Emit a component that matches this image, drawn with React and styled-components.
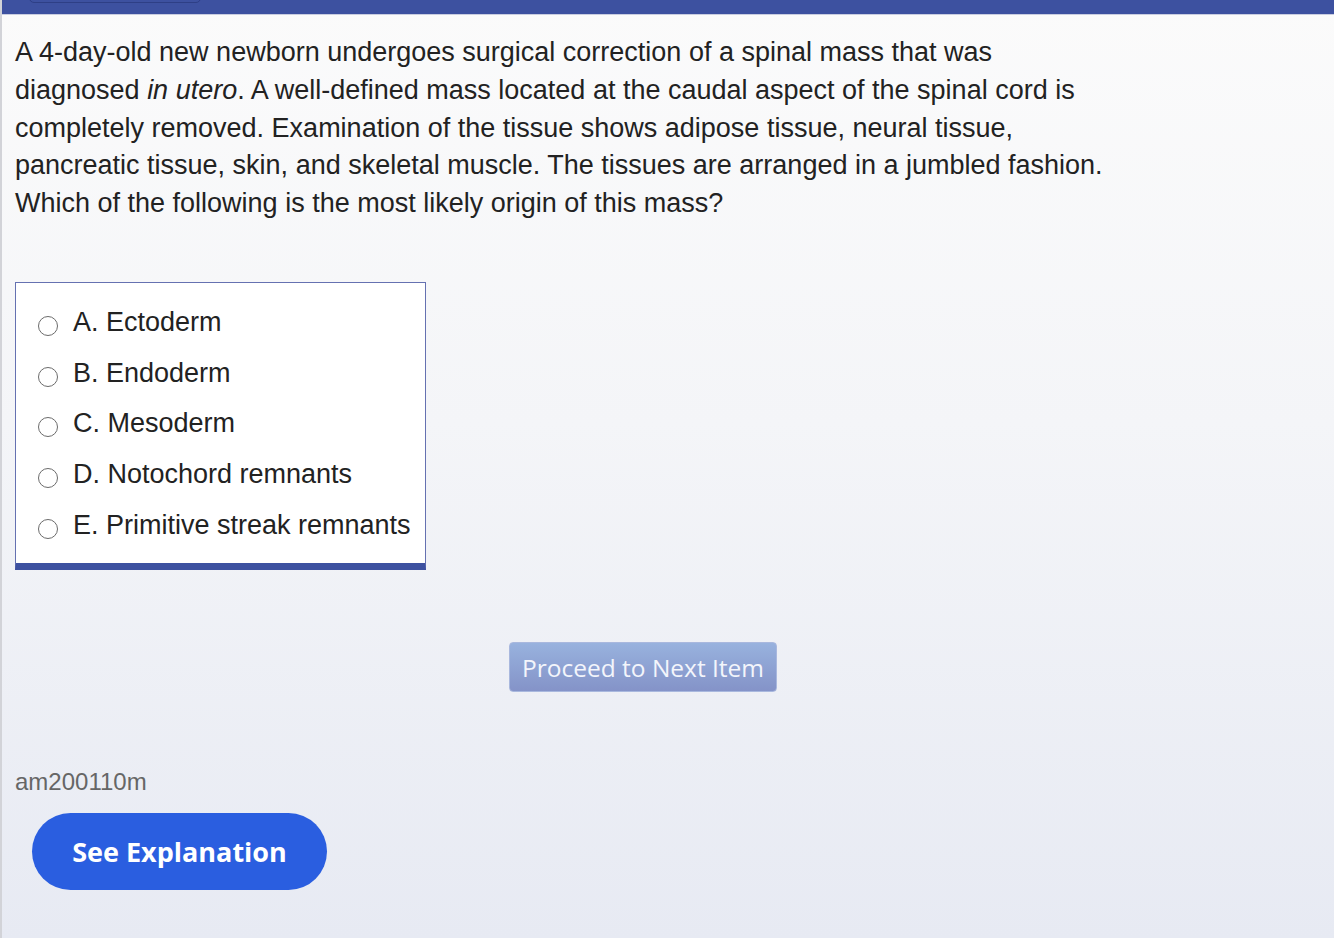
import React from 'react';
import styled, { createGlobalStyle } from 'styled-components';

const colors = {
  navy: '#3d51a0',
  text: '#222222',
  muted: '#666666',
  frame: '#6571b1',
  blue: '#2a5ee0',
};

const GlobalStyle = createGlobalStyle`
  html, body {
    margin: 0;
    padding: 0;
  }
  body {
    font-family: "Liberation Sans", Arial, sans-serif;
    background: linear-gradient(180deg, #fbfbfb 0%, #f4f5f8 45%, #e7eaf3 100%);
    min-height: 100vh;
  }
`;

const Page = styled.div`
  min-height: 100vh;
  border-left: 2px solid #d2d3d8;
  box-sizing: border-box;
  display: flex;
  flex-direction: column;
`;

const TopBar = styled.div`
  height: 14px;
  background: ${colors.navy};
  border-bottom: 1px solid #c9cde0;
  padding-left: 27px;
  display: flex;
  align-items: flex-start;
  overflow: hidden;
`;

const Tab = styled.div`
  width: 172px;
  height: 20px;
  margin-top: -17px;
  border: 1px solid #2e3f86;
  border-radius: 5px;
  box-sizing: border-box;
`;

const Content = styled.main`
  padding: 0 13px;
  display: flex;
  flex-direction: column;
  align-items: flex-start;
`;

const Stem = styled.p`
  margin: 19px 0 0;
  font-size: 27px;
  line-height: 37.8px;
  color: ${colors.text};
  white-space: nowrap;
  em {
    font-style: italic;
  }
`;

const Choices = styled.div`
  margin-top: 59px;
  width: 411px;
  box-sizing: border-box;
  background: #ffffff;
  border: 1px solid ${colors.frame};
  border-bottom: 7px solid ${colors.navy};
  padding: 14px 0 13px 22px;
  display: flex;
  flex-direction: column;
`;

const Choice = styled.label`
  height: 50.7px;
  display: flex;
  align-items: center;
  gap: 15px;
  font-size: 27px;
  color: ${colors.text};
  white-space: nowrap;
  cursor: pointer;
`;

const Radio = styled.span`
  width: 20px;
  height: 20px;
  margin-top: 7px;
  border: 1.5px solid #6b6b6b;
  border-radius: 50%;
  box-sizing: border-box;
  background: #fff;
  flex: none;
`;

const NextButton = styled.button`
  margin: 72px 0 0 494px;
  width: 268px;
  height: 50px;
  border: 1px solid #a9b8de;
  border-radius: 4px;
  background: linear-gradient(180deg, #98b2de 0%, #8493c8 100%);
  color: #f3f5fb;
  font-family: "Open Sans", sans-serif;
  font-size: 24.5px;
  font-weight: 400;
  padding: 0;
  cursor: default;
`;

const ItemId = styled.div`
  margin-top: 76px;
  font-size: 24px;
  line-height: 27px;
  color: ${colors.muted};
`;

const ExplainButton = styled.button`
  margin: 18px 0 0 17px;
  width: 295px;
  height: 77px;
  border: none;
  border-radius: 39px;
  background: ${colors.blue};
  color: #ffffff;
  font-family: "Open Sans", sans-serif;
  font-size: 27px;
  font-weight: 700;
  padding: 0;
  cursor: pointer;
`;

const options = [
  'A. Ectoderm',
  'B. Endoderm',
  'C. Mesoderm',
  'D. Notochord remnants',
  'E. Primitive streak remnants',
];

export default function App() {
  return (
    <>
      <GlobalStyle />
      <Page>
        <TopBar>
          <Tab />
        </TopBar>
        <Content>
          <Stem>
            A 4-day-old new newborn undergoes surgical correction of a spinal mass that was
            <br />
            diagnosed <em>in utero</em>. A well-defined mass located at the caudal aspect of the spinal cord is
            <br />
            completely removed. Examination of the tissue shows adipose tissue, neural tissue,
            <br />
            pancreatic tissue, skin, and skeletal muscle. The tissues are arranged in a jumbled fashion.
            <br />
            Which of the following is the most likely origin of this mass?
          </Stem>
          <Choices>
            {options.map((opt) => (
              <Choice key={opt}>
                <Radio />
                {opt}
              </Choice>
            ))}
          </Choices>
          <NextButton>Proceed to Next Item</NextButton>
          <ItemId>am200110m</ItemId>
          <ExplainButton>See Explanation</ExplainButton>
        </Content>
      </Page>
    </>
  );
}
